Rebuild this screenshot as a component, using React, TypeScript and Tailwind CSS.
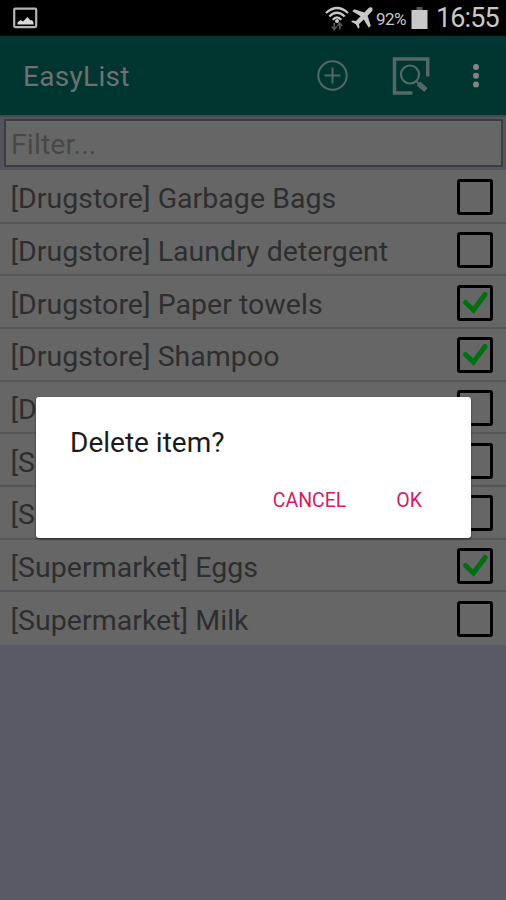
import React from 'react';

interface Item {
  label: string;
  done: boolean;
}

const items: Item[] = [
  { label: '[Drugstore] Garbage Bags', done: false },
  { label: '[Drugstore] Laundry detergent', done: false },
  { label: '[Drugstore] Paper towels', done: true },
  { label: '[Drugstore] Shampoo', done: true },
  { label: '[D', done: false },
  { label: '[S', done: false },
  { label: '[S', done: false },
  { label: '[Supermarket] Eggs', done: true },
  { label: '[Supermarket] Milk', done: false },
];

const StatusBar: React.FC = () => (
  <div className="flex h-9 shrink-0 items-center bg-black pl-[13px] pr-[8px] text-[#c8c8c8]">
    <svg width="25" height="22" viewBox="0 0 25 22">
      <rect x="1.2" y="1.7" width="22" height="18.4" rx="1" fill="none" stroke="#b4b4b4" strokeWidth="2.2" />
      <path d="M4.500 17.500v-2l3-2.500 2.500 1.500 4.500-4.500 3 3.500 1.500-.5 1.500 2.500v2z" fill="#d8d8d8" />
    </svg>
    <svg className="ml-auto" width="24" height="26" viewBox="0 0 24 26" fill="none">
      <g stroke="#c8c8c8" strokeWidth="2.200">
        <path d="M1 8Q12 -2 23 8" />
        <path d="M4.300 11.500Q12 4 19.700 11.500" />
        <path d="M7.700 14.800Q12 10 16.300 14.800" />
      </g>
      <circle cx="12" cy="16" r="2" fill="#c8c8c8" />
      <path d="M9.300 18v6M6.800 21.500l2.500 3 2.500-3M14.800 24.500v-6M12.300 21l2.500-3 2.500 3" stroke="#555" strokeWidth="1.700" />
    </svg>
    <svg className="ml-[2px]" width="22" height="22" viewBox="0 0 22 22" fill="#c8c8c8">
      <path d="M21 .8c-.9-.9-2.600-.5-3.600.5l-4.100 4.100L3.300 2.200 1.300 4.200l8.300 5-4.700 4.800-3.500-.5L.2 14.700l4.600 2.500 2.500 4.600 1.200-1.200-.5-3.500 4.800-4.700 5 8.300 2-2-3.200-10 4.100-4.100c1-1 1.200-2.900.3-3.800z" />
    </svg>
    <span className="ml-[3px] w-[32px] whitespace-nowrap pt-[3px] text-[17px] tracking-[-0.5px]">92%</span>
    <svg className="ml-[3px]" width="17" height="24" viewBox="0 0 17 24">
      <path d="M5.500 1h6v3h-6z" fill="#555" />
      <path d="M.5 4h16v19H.5z" fill="#c8c8c8" />
    </svg>
    <span className="ml-[8px] w-[62px] whitespace-nowrap text-right text-[27px] leading-9 tracking-[-0.9px]">16:55</span>
  </div>
);

const ActionBar: React.FC = () => (
  <header className="flex h-[79px] shrink-0 items-center bg-[#003530] pl-[23px] pr-[26px]">
    <h1 className="pt-[2px] text-[28px] tracking-[0.3px] text-[#707070]">EasyList</h1>
    <svg className="ml-auto" width="32" height="32" viewBox="0 0 32 32" fill="none" stroke="#526965" strokeWidth="2">
      <circle cx="15.500" cy="15.500" r="14.200" />
      <path d="M15.500 7.500v16M7.500 15.500h16" />
    </svg>
    <svg className="ml-[43px]" width="40" height="40" viewBox="0 0 40 40" fill="none" stroke="#526965">
      <path d="M35.700 20.500V3H2.500v34H20.500" strokeWidth="3.500" />
      <circle cx="18" cy="18.500" r="9" strokeWidth="2.200" />
      <path d="M24 25l4 4" strokeWidth="2" />
      <path d="M26.500 27.500l7.500 6.500" strokeWidth="5" />
    </svg>
    <svg className="ml-[40px]" width="8" height="26" viewBox="0 0 8 26" fill="#858585">
      <circle cx="4" cy="4" r="3" />
      <circle cx="4" cy="12.700" r="3" />
      <circle cx="4" cy="21.400" r="3" />
    </svg>
  </header>
);

const CheckBox: React.FC<{ checked: boolean }> = ({ checked }) => (
  <svg width="36" height="36" viewBox="0 0 36 36" fill="none">
    <rect x="1.500" y="1.500" width="33" height="33" rx="1.500" stroke="#000" strokeWidth="3" />
    {checked && (
      <path d="M8.500 17.500l8 7.500L28 9.500" stroke="#006f12" strokeWidth="5" strokeLinecap="round" />
    )}
  </svg>
);

const DeleteDialog: React.FC = () => (
  <div
    role="dialog"
    className="absolute left-[36px] top-[397px] flex h-[141px] w-[435px] flex-col rounded-[3px] bg-white pl-[34px] pr-[49px] pt-[28px] shadow-[0_1px_2px_#222]"
  >
    <p className="text-[28px] leading-[36px] text-[#1c1c1c]">Delete item?</p>
    <div className="mt-[28px] flex justify-end gap-[50px] text-[19.500px] leading-[24px] text-[#d81b60]">
      <button>CANCEL</button>
      <button>OK</button>
    </div>
  </div>
);

export default function App() {
  return (
    <div className="relative flex h-[900px] w-[506px] flex-col overflow-hidden bg-[#5a5a66] font-[Roboto,sans-serif]">
      <StatusBar />
      <ActionBar />
      <div className="h-[55px] shrink-0 border-t-2 border-[#48484c] bg-[#54545f] pl-[4px] pr-[3px] pt-[2px]">
        <div className="flex h-[48px] items-center border-2 border-[#3d3d3f] bg-[#666] pl-[5px] pt-[4px] text-[28.500px] tracking-[0.1px] text-[#484848]">
          Filter...
        </div>
      </div>
      <ul className="grid h-[475px] shrink-0 grid-rows-9 bg-[#666] pt-[1px]">
        {items.map((item, idx) => (
          <li
            key={idx}
            className="flex items-center justify-between border-b-2 border-[#57575a] pl-[10.500px] pr-[13px] pt-[2px] last:border-transparent"
          >
            <span className="whitespace-nowrap pt-[4px] text-[28.500px] leading-[36px] tracking-[0.03px] text-[#2e2e2e]">
              {item.label}
            </span>
            <CheckBox checked={item.done} />
          </li>
        ))}
      </ul>
      <DeleteDialog />
    </div>
  );
}
